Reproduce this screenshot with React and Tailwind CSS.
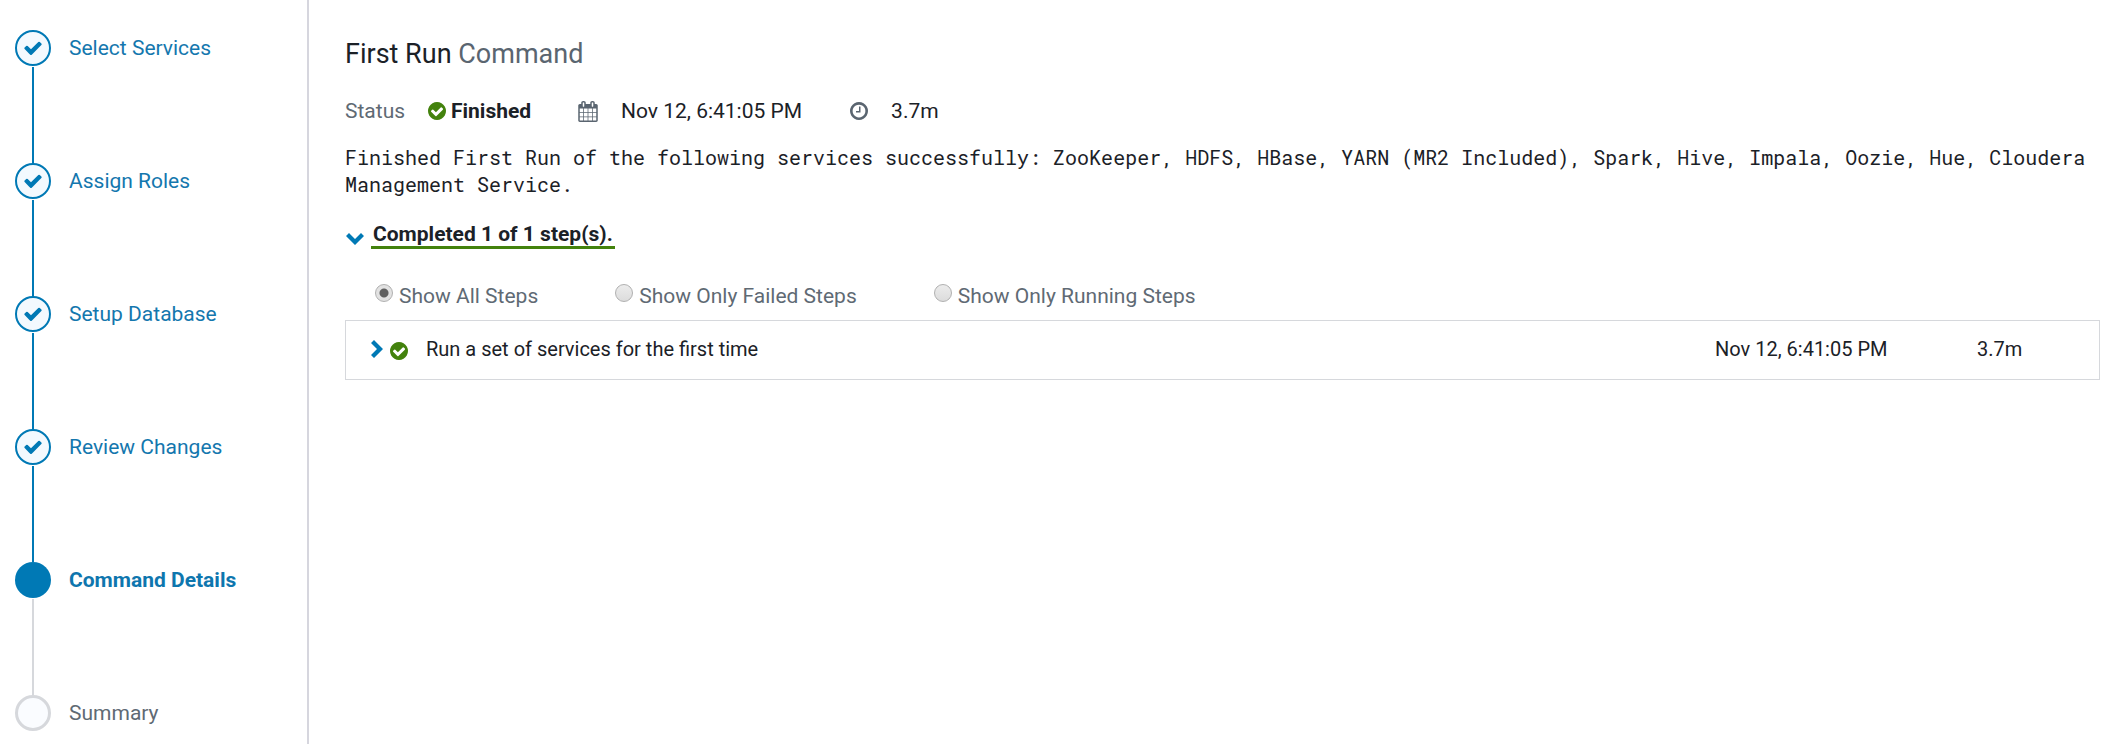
import React, { useState } from "react";

const CHECK_CIRCLE =
  "M1284 606q0-28-18-46l-91-90q-19-19-45-19t-45 19l-408 407-226-226q-19-19-45-19t-45 19l-91 90q-18 18-18 46 0 27 18 45l362 362q19 19 45 19 27 0 46-19l543-543q18-18 18-45zm252 162q0 209-103 385.5t-279.5 279.5-385.5 103-385.5-103-279.5-279.5-103-385.5 103-385.5 279.5-279.5 385.5-103 385.5 103 279.5 279.5 103 385.5z";
const CHECK =
  "M1671 566q0 40-28 68l-724 724-136 136q-28 28-68 28t-68-28l-136-136-362-362q-28-28-28-68t28-68l136-136q28-28 68-28t68 28l294 295 656-657q28-28 68-28t68 28l136 136q28 28 28 68z";
const CALENDAR =
  "M192 1664h288v-288h-288v288zm352 0h320v-288h-320v288zm-352-352h288v-320h-288v320zm352 0h320v-320h-320v320zm-352-384h288v-288h-288v288zm736 736h320v-288h-320v288zm-384-736h320v-288h-320v288zm768 736h288v-288h-288v288zm-384-352h320v-320h-320v320zm-352-864v-288q0-13-9.5-22.5t-22.5-9.5h-64q-13 0-22.5 9.5t-9.5 22.5v288q0 13 9.5 22.5t22.5 9.5h64q13 0 22.5-9.5t9.5-22.5zm736 864h288v-320h-288v320zm-384-384h320v-288h-320v288zm384 0h288v-288h-288v288zm32-480v-288q0-13-9.5-22.5t-22.5-9.5h-64q-13 0-22.5 9.5t-9.5 22.5v288q0 13 9.5 22.5t22.5 9.5h64q13 0 22.5-9.5t9.5-22.5zm384-64v1280q0 52-38 90t-90 38h-1408q-52 0-90-38t-38-90v-1280q0-52 38-90t90-38h128v-96q0-66 47-113t113-47h64q66 0 113 47t47 113v96h384v-96q0-66 47-113t113-47h64q66 0 113 47t47 113v96h128q52 0 90 38t38 90z";
const CLOCK =
  "M1024 544v448q0 14-9 23t-23 9h-320q-14 0-23-9t-9-23v-64q0-14 9-23t23-9h224v-352q0-14 9-23t23-9h64q14 0 23 9t9 23zm416 352q0-148-73-273t-198-198-273-73-273 73-198 198-73 273 73 273 198 198 273 73 273-73 198-198 73-273zm224 0q0 209-103 385.5t-279.5 279.5-385.5 103-385.5-103-279.5-279.5-103-385.5 103-385.5 279.5-279.5 385.5-103 385.5 103 279.5 279.5 103 385.5z";

function Glyph({ d, box, className }) {
  return (
    <svg viewBox={box} className={className} fill="currentColor" aria-hidden="true">
      <path d={d} />
    </svg>
  );
}

const steps = [
  { label: "Select Services", state: "done" },
  { label: "Assign Roles", state: "done" },
  { label: "Setup Database", state: "done" },
  { label: "Review Changes", state: "done" },
  { label: "Command Details", state: "current" },
  { label: "Summary", state: "todo" },
];

const circleStyles = {
  done: "border-2 border-[#0079b5] bg-[#f3f9fe] text-[#0079b5]",
  current: "bg-[#0079b5]",
  todo: "border-3 border-[#d6d8dc] bg-[#fafcff]",
};
const labelStyles = {
  done: "text-[#1477ae]",
  current: "font-bold text-[#0e76ae]",
  todo: "text-[#5f6a74]",
};

function Step({ step, last }) {
  return (
    <li className="flex items-start gap-[18px]">
      <div className="flex w-9 shrink-0 flex-col items-center">
        <span className={`flex size-9 items-center justify-center rounded-full ${circleStyles[step.state]}`}>
          {step.state === "done" && <Glyph d={CHECK} box="0 0 1792 1792" className="size-5" />}
        </span>
        {!last && (
          <span
            className={`mt-px h-24 w-0.5 ${step.state === "done" ? "bg-[#0079b5]" : "bg-[#d6d8dc]"}`}
          />
        )}
      </div>
      <a href="#" className={`leading-9 ${labelStyles[step.state]}`}>
        {step.label}
      </a>
    </li>
  );
}

const filters = ["Show All Steps", "Show Only Failed Steps", "Show Only Running Steps"];

export default function App() {
  const [filter, setFilter] = useState(filters[0]);
  const [open, setOpen] = useState(true);

  return (
    <div className="flex min-h-screen bg-white font-['Roboto',sans-serif] text-[21px] text-[#1b2127]">
      <nav className="w-[309px] shrink-0 border-r-2 border-[#d6d6de] pt-[30px] pl-[15px]">
        <ol>
          {steps.map((s, i) => (
            <Step key={s.label} step={s} last={i === steps.length - 1} />
          ))}
        </ol>
      </nav>

      <main className="min-w-0 flex-1 pt-9 pr-[22px] pl-9">
        <h1 className="text-[27px] leading-9">
          First Run <span className="text-[#5a6570]">Command</span>
        </h1>

        <div className="mt-6 flex items-center leading-[30px]">
          <span className="w-[83px] text-[#5f6a74]">Status</span>
          <span className="flex w-[150px] items-center gap-[5px] font-bold">
            <Glyph d={CHECK_CIRCLE} box="0 0 1536 1536" className="size-[18px] text-[#43820d]" />
            Finished
          </span>
          <Glyph d={CALENDAR} box="64 0 1664 1792" className="h-[21px] w-5 text-[#5a6570]" />
          <span className="ml-[23px]">Nov 12, 6:41:05 PM</span>
          <Glyph d={CLOCK} box="128 128 1536 1536" className="ml-12 size-[18px] text-[#5a6570]" />
          <span className="ml-[23px]">3.7m</span>
        </div>

        <p className="mt-[18px] font-['Roboto_Mono','Liberation_Mono',monospace] text-[20px] leading-[27px]">
          Finished First Run of the following services successfully: ZooKeeper, HDFS, HBase, YARN (MR2
          Included), Spark, Hive, Impala, Oozie, Hue, Cloudera Management Service.
        </p>

        <button
          type="button"
          aria-expanded={open}
          onClick={() => setOpen(!open)}
          className="mt-6 flex items-center gap-[7px] font-bold"
        >
          <svg viewBox="0 0 18 12" className="mt-1.5 ml-px h-3 w-[18px] text-[#0079b5]" fill="currentColor" aria-hidden="true">
            <path d="M0 3 3 0 9 6 15 0 18 3 9 12Z" />
          </svg>
          <span className="border-b-3 border-[#43820d] px-0.5 leading-6">Completed 1 of 1 step(s).</span>
        </button>

        {open && (
          <section>
            <div role="radiogroup" aria-label="Steps shown" className="mt-8 flex gap-[77px] pl-[30px] leading-[30px] text-[#5f6a74]">
              {filters.map((f) => (
                <label key={f} className="flex gap-1.5">
                  <input
                    type="radio"
                    name="filter"
                    checked={filter === f}
                    onChange={() => setFilter(f)}
                    className="mt-[3px] size-[18px] appearance-none rounded-full border border-[#b0b0b0] bg-linear-to-b from-[#ececec] to-[#dcdcdc] checked:bg-[radial-gradient(circle,#606060_4px,#e2e2e2_5px)]"
                  />
                  {f}
                </label>
              ))}
            </div>

            <div className="mt-[9px] border border-[#d6d8dc]">
              <table className="w-full table-fixed text-[20px]">
                <tbody>
                  <tr className="h-[58px]">
                    <td className="pb-0.5">
                      <div className="flex items-center pl-[25px]">
                        <button type="button" aria-label="Expand step" className="mr-[7px]">
                          <svg viewBox="0 0 12 18" className="h-[18px] w-3 text-[#0079b5]" fill="currentColor" aria-hidden="true">
                            <path d="M3 0 0 3 6 9 0 15 3 18 12 9Z" />
                          </svg>
                        </button>
                        <Glyph d={CHECK_CIRCLE} box="0 0 1536 1536" className="mt-1 mr-[18px] size-[18px] text-[#43820d]" />
                        Run a set of services for the first time
                      </div>
                    </td>
                    <td className="w-[262px] pb-0.5">Nov 12, 6:41:05 PM</td>
                    <td className="w-[122px] pb-0.5">3.7m</td>
                  </tr>
                </tbody>
              </table>
            </div>
          </section>
        )}
      </main>
    </div>
  );
}
